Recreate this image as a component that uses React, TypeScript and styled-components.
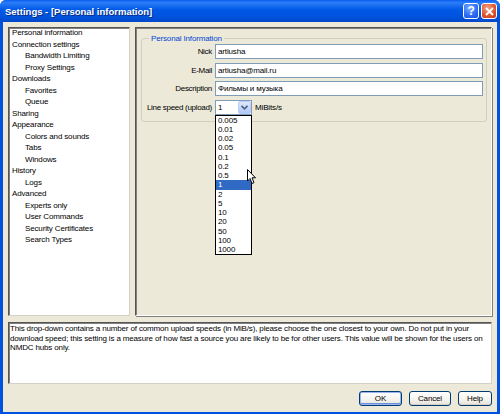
import { FC } from "react";
import styled, { createGlobalStyle } from "styled-components";

const GlobalStyle = createGlobalStyle`
  html, body {
    margin: 0;
    padding: 0;
    width: 500px;
    height: 414px;
    overflow: hidden;
    background: #ffffff;
  }
  * {
    box-sizing: border-box;
  }
`;

const Window = styled.div`
  width: 500px;
  height: 414px;
  display: flex;
  flex-direction: column;
  background: #0053e1;
  border-radius: 6px 6px 0 0;
  overflow: hidden;
  font-family: "Liberation Sans", Arial, sans-serif;
  font-size: 8px;
  letter-spacing: -0.15px;
  color: #000;
`;

const TitleBar = styled.div`
  height: 22px;
  flex: none;
  display: flex;
  align-items: center;
  padding: 0 3px 0 5px;
  background: linear-gradient(180deg, #0a5ff0 0%, #2b7cf7 12%, #0058e6 45%, #0052dc 80%, #0048c8 100%);
`;

const Title = styled.div`
  flex: 1;
  color: #fff;
  font-weight: bold;
  font-size: 9.5px;
  text-shadow: 1px 1px 0 #0a2a80;
  letter-spacing: 0;
`;

const CaptionButton = styled.div<{ $close?: boolean }>`
  width: 16px;
  height: 16px;
  margin-left: 2px;
  border: 1px solid #fff;
  border-radius: 3px;
  display: flex;
  align-items: center;
  justify-content: center;
  color: #fff;
  font-weight: bold;
  font-size: 12px;
  background: ${(p) =>
    p.$close
      ? "radial-gradient(circle at 40% 30%, #f2a58a 0%, #e2562f 55%, #c1381a 100%)"
      : "radial-gradient(circle at 40% 30%, #7eb0ff 0%, #2e6ff5 55%, #1a50d8 100%)"};
`;

const Body = styled.div`
  flex: 1;
  margin: 0 3px 3px 3px;
  background: #ece9d8;
  display: flex;
  flex-direction: column;
  padding: 5px 5px 6px 5px;
`;

const Main = styled.div`
  height: 289px;
  flex: none;
  display: flex;
  gap: 5px;
`;

const Tree = styled.ul`
  width: 122px;
  margin: 0;
  padding: 0 0 0 3px;
  list-style: none;
  background: #fff;
  border: 1px solid #555;
  border-right-color: #d4d0c8;
  border-bottom-color: #d4d0c8;
  box-shadow: inset 1px 1px 0 #808080;
`;

const TreeItem = styled.li<{ $level: number }>`
  height: 11.5px;
  line-height: 10px;
  padding-left: ${(p) => p.$level * 13}px;
  white-space: nowrap;
`;

const Page = styled.div`
  flex: 1;
  position: relative;
  border: 1px solid #555;
  border-right-color: #fff;
  border-bottom-color: #fff;
  box-shadow: inset 1px 1px 0 #808080, 1px 1px 0 #808080;
  padding: 6px 4px 0 5px;
`;

const Group = styled.fieldset`
  margin: 0;
  border: 1px solid #d0d0bf;
  border-radius: 3px;
  padding: 1px 3px 6px 3px;
  min-width: 0;
`;

const Legend = styled.legend`
  color: #0046d5;
  padding: 0 2px;
  margin-left: 4px;
`;

const Form = styled.div`
  display: grid;
  grid-template-columns: 67px 1fr;
  column-gap: 3px;
  row-gap: 3.5px;
  align-items: center;
`;

const Label = styled.div`
  justify-self: end;
  text-align: right;
  white-space: nowrap;
  letter-spacing: -0.3px;
`;

const TextInput = styled.div`
  height: 15px;
  border: 1px solid #7f9db9;
  background: #fff;
  padding: 0 2px;
  line-height: 13px;
  white-space: nowrap;
  overflow: hidden;
`;

const SpeedRow = styled.div`
  display: flex;
  align-items: center;
  gap: 3px;
`;

const Combo = styled.div`
  position: relative;
  width: 37px;
  height: 15px;
  border: 1px solid #7f9db9;
  background: #fff;
  display: flex;
  align-items: center;
  padding-left: 2px;
`;

const ComboValue = styled.span`
  flex: 1;
`;

const ComboArrow = styled.div`
  width: 13px;
  height: 13px;
  border: 1px solid #b9cef7;
  border-radius: 2px;
  background: linear-gradient(180deg, #dfe8fc 0%, #c3d4fb 60%, #b2c7f7 100%);
  display: flex;
  align-items: center;
  justify-content: center;
`;

const DropList = styled.ul`
  position: absolute;
  top: 14px;
  left: -1px;
  width: 37px;
  margin: 0;
  padding: 0;
  list-style: none;
  background: #fff;
  border: 1px solid #000;
  z-index: 2;
`;

const DropItem = styled.li<{ $selected?: boolean }>`
  height: 9.25px;
  line-height: 9.25px;
  padding-left: 2px;
  background: ${(p) => (p.$selected ? "#316ac5" : "transparent")};
  color: ${(p) => (p.$selected ? "#fff" : "#000")};
`;

const Cursor = styled.svg`
  position: absolute;
  left: 31px;
  top: 68px;
  z-index: 3;
`;

const HelpBox = styled.div`
  height: 62px;
  flex: none;
  margin-top: 6px;
  background: #fff;
  border: 1px solid #555;
  border-right-color: #d4d0c8;
  border-bottom-color: #d4d0c8;
  box-shadow: inset 1px 1px 0 #808080;
  padding: 1px 2px 0 1px;
  line-height: 9.5px;
`;

const Buttons = styled.div`
  margin-top: 7px;
  display: flex;
  justify-content: flex-end;
  gap: 7px;
`;

const Button = styled.div<{ $width: number; $default?: boolean }>`
  width: ${(p) => p.$width}px;
  height: 15px;
  border: 1px solid #003c74;
  border-radius: 3px;
  background: linear-gradient(180deg, #ffffff 0%, #f4f3ee 60%, #e3e1d6 100%);
  box-shadow: ${(p) =>
    p.$default ? "inset 0 0 0 1px #9cb5ec, inset 0 -1px 0 1px #6b8fe0" : "inset 0 -1px 0 #d6d0c5"};
  display: flex;
  align-items: center;
  justify-content: center;
`;

const tree: [string, number][] = [
  ["Personal information", 0],
  ["Connection settings", 0],
  ["Bandwidth Limiting", 1],
  ["Proxy Settings", 1],
  ["Downloads", 0],
  ["Favorites", 1],
  ["Queue", 1],
  ["Sharing", 0],
  ["Appearance", 0],
  ["Colors and sounds", 1],
  ["Tabs", 1],
  ["Windows", 1],
  ["History", 0],
  ["Logs", 1],
  ["Advanced", 0],
  ["Experts only", 1],
  ["User Commands", 1],
  ["Security Certificates", 1],
  ["Search Types", 1],
];

const speeds = ["0.005", "0.01", "0.02", "0.05", "0.1", "0.2", "0.5", "1", "2", "5", "10", "20", "50", "100", "1000"];

const App: FC = () => (
  <>
    <GlobalStyle />
    <Window>
      <TitleBar>
        <Title>Settings - [Personal information]</Title>
        <CaptionButton>?</CaptionButton>
        <CaptionButton $close>
          <svg width="9" height="9" viewBox="0 0 9 9">
            <path d="M1 1 L8 8 M8 1 L1 8" stroke="#fff" strokeWidth="1.8" />
          </svg>
        </CaptionButton>
      </TitleBar>
      <Body>
        <Main>
          <Tree>
            {tree.map(([name, level]) => (
              <TreeItem key={name} $level={level}>
                {name}
              </TreeItem>
            ))}
          </Tree>
          <Page>
            <Group>
              <Legend>Personal Information</Legend>
              <Form>
                <Label>Nick</Label>
                <TextInput>artiusha</TextInput>
                <Label>E-Mail</Label>
                <TextInput>artiusha@mail.ru</TextInput>
                <Label>Description</Label>
                <TextInput>Фильмы и музыка</TextInput>
                <Label>Line speed (upload)</Label>
                <SpeedRow>
                  <Combo>
                    <ComboValue>1</ComboValue>
                    <ComboArrow>
                      <svg width="7" height="5" viewBox="0 0 7 5">
                        <path d="M0.5 0.8 L3.5 3.8 L6.5 0.8" fill="none" stroke="#4d6185" strokeWidth="1.6" />
                      </svg>
                    </ComboArrow>
                    <DropList>
                      {speeds.map((s) => (
                        <DropItem key={s} $selected={s === "1"}>
                          {s}
                        </DropItem>
                      ))}
                    </DropList>
                    <Cursor width="10" height="16" viewBox="0 0 10 16">
                      <path d="M0.5 0.5 L0.5 12 L3 9.5 L5 14.5 L7 13.6 L5 8.8 L8.5 8.8 Z" fill="#fff" stroke="#000" strokeWidth="1" />
                    </Cursor>
                  </Combo>
                  <span>MiBits/s</span>
                </SpeedRow>
              </Form>
            </Group>
          </Page>
        </Main>
        <HelpBox>
          This drop-down contains a number of common upload speeds (in MiB/s), please choose the one closest to your
          own. Do not put in your download speed; this setting is a measure of how fast a source you are likely to be
          for other users. This value will be shown for the users on NMDC hubs only.
        </HelpBox>
        <Buttons>
          <Button $width={43} $default>
            OK
          </Button>
          <Button $width={42}>Cancel</Button>
          <Button $width={34}>Help</Button>
        </Buttons>
      </Body>
    </Window>
  </>
);

export default App;
